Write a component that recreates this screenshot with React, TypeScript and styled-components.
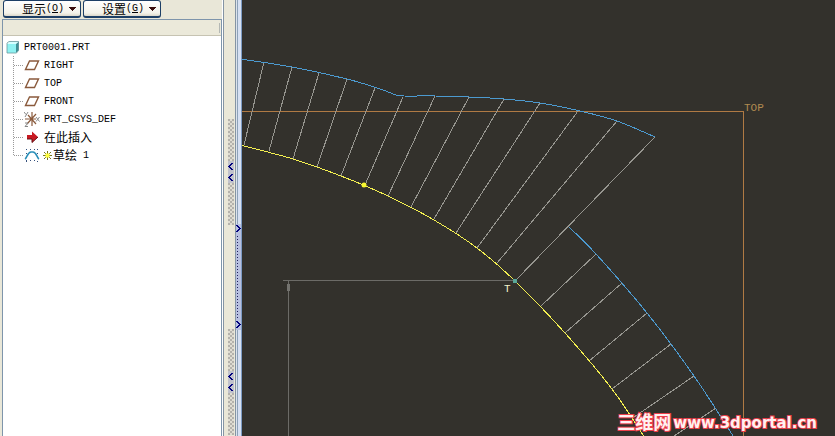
import React from "react";
import styled, { createGlobalStyle } from "styled-components";

const Global = createGlobalStyle`
  * { box-sizing: border-box; }
  body { margin: 0; background: #ece9d8; }
`;

const LATIN = `"Liberation Mono", "Noto Sans CJK SC", monospace`;
const HAN = `"Noto Sans CJK SC", sans-serif`;

const Page = styled.div`
  display: flex;
  height: 100vh;
  overflow: hidden;
  background: #e9e7d8;
  color: #000;
`;

const Sidebar = styled.aside`
  display: flex;
  flex-direction: column;
  flex: 0 0 222px;
  padding-left: 2px;
`;

const Toolbar = styled.div`
  display: flex;
  gap: 2px;
  height: 19px;
  padding-left: 1px;
`;

const MenuButton = styled.button`
  display: flex;
  align-items: center;
  justify-content: center;
  width: 78px;
  height: 18px;
  padding: 1px 0 0 14px;
  border: 1px solid #1d3f66;
  border-bottom-width: 2px;
  border-radius: 3px;
  background: linear-gradient(#fff, #f3f2ea 80%, #dcd8ca);
  font: 12px/18px ${HAN};
  color: #000;
  white-space: nowrap;
`;

const Key = styled.span`
  margin-right: 4px;
  font: 10px/14px ${LATIN};
`;

const TreePanel = styled.section`
  display: flex;
  flex-direction: column;
  flex: 1;
  border: 1px solid #7e95ab;
  border-bottom: 0;
  background: #fff;
`;

const ColumnHeader = styled.div`
  display: flex;
  justify-content: flex-end;
  height: 16px;
  padding: 3px 1px 2px;
  border-bottom: 1px solid #c6c3b2;
  background: #ebe9da;
`;

const HeaderDivider = styled.span`
  width: 1px;
  background: #b4b8b4;
`;

const Tree = styled.ul`
  margin: 0;
  padding: 2px 0 0 3px;
  list-style: none;
`;

const Branch = styled.ul`
  margin: 0;
  padding: 0 0 0 6px;
  list-style: none;
`;

const Row = styled.div`
  display: flex;
  align-items: center;
  height: 18px;
  svg { flex: none; display: block; }
`;

const Label = styled.span<{ $han?: boolean; $inset?: number }>`
  margin-left: ${(p) => p.$inset ?? 4}px;
  padding-top: ${(p) => (p.$han ? 0 : 2)}px;
  font: ${(p) => (p.$han ? 12 : 10)}px/18px ${(p) => (p.$han ? HAN : LATIN)};
  white-space: pre;
`;

const SketchMark = styled.span`
  margin: 0 1px 0 3px;
`;

const Sash = styled.div`
  display: flex;
  flex: 0 0 20px;
  border-left: 1px solid #fff;
`;

const SashTrack = styled.div<{ $blue?: boolean }>`
  display: flex;
  flex-direction: column;
  align-items: flex-end;
  width: ${(p) => (p.$blue ? 7 : 12)}px;
  padding-top: ${(p) => (p.$blue ? 224 : 119)}px;
  gap: 104px;
  border-left: 1px solid #8494a4;
  border-right: ${(p) => (p.$blue ? "1px solid #7d9bc4" : "0")};
  padding-right: ${(p) => (p.$blue ? 0 : 1)}px;
  background: ${(p) =>
    p.$blue
      ? "linear-gradient(90deg, #dce3ec 0 1px, #8ea2b8 1px 2px, #d6e0f2 2px)"
      : "#e9e7d8"};
`;

const Grip = styled.button<{ $blue?: boolean }>`
  flex: none;
  width: ${(p) => (p.$blue ? 5 : 6)}px;
  height: 106px;
  padding: 0;
  border: 0;
  background: ${(p) => (p.$blue ? "#b8c0e0" : "#dedcd2")};
  svg { display: block; }
`;

const Viewport = styled.main`
  position: relative;
  flex: 1;
  min-width: 0;
  background: #33312c;
`;

const Drawing = styled.svg`
  display: block;
  width: 100%;
  height: 100%;
`;

const Watermark = styled.a`
  position: absolute;
  right: 18px;
  bottom: 4px;
  display: flex;
  align-items: flex-start;
  gap: 2px;
  font: bold 15px/18px "DejaVu Sans", sans-serif;
  color: #fff0f0;
  text-decoration: none;
  white-space: nowrap;
  -webkit-text-stroke: 2px #ec3f4a;
  paint-order: stroke fill;
`;

const WatermarkHan = styled.span`
  font: bold 18px/15px ${HAN};
`;

type Pt = [number, number];

function smooth(pts: Pt[]): string {
  let d = `M${pts[0]}`;
  for (let i = 0; i < pts.length - 1; i++) {
    const a = pts[i - 1] ?? pts[i];
    const b = pts[i];
    const c = pts[i + 1];
    const e = pts[i + 2] ?? c;
    d += `C${b[0] + (c[0] - a[0]) / 6},${b[1] + (c[1] - a[1]) / 6} ${c[0] - (e[0] - b[0]) / 6},${c[1] - (e[1] - b[1]) / 6} ${c}`;
  }
  return d;
}

const curve: Pt[] = [
  [240, 145], [293, 159], [341, 176], [388, 196], [434, 220], [477, 248],
  [515, 281], [565, 333], [612, 389], [645, 438],
];
const upper: Pt[] = [
  [240, 59], [292, 67], [347, 79], [380, 89], [396, 95],
  [404, 96], [435, 96], [469, 97], [504, 99], [540, 103], [580, 111],
  [617, 121], [655, 137],
];
const lower: Pt[] = [
  [569, 227], [596, 254], [647, 313], [694, 376], [735, 439],
];
const comb: [number, number, number, number][] = [
  [264, 62, 244, 145], [292, 67, 269, 151], [319, 73, 293, 159], [347, 79, 317, 167],
  [375, 88, 341, 176], [403, 97, 365, 185], [435, 96, 388, 196], [469, 97, 411, 207],
  [504, 99, 434, 219], [540, 103, 456, 233], [578, 111, 477, 248], [617, 121, 497, 263],
  [655, 137, 515, 281], [596, 254, 541, 306], [622, 283, 565, 333], [647, 313, 589, 361],
  [671, 344, 612, 389], [694, 376, 634, 417], [716, 408, 671, 438],
];

const Caret = () => (
  <svg width="8" height="4" viewBox="0 0 8 4" shapeRendering="crispEdges">
    <path d="M0 0H8L4 4Z" fill="#3a0d0d" />
  </svg>
);

const PartIcon = () => (
  <svg width="14" height="14" viewBox="0 0 14 14">
    <path d="M1 4L4 1.5H13L10 4Z" fill="#d6ffff" />
    <path d="M10 4L13 1.5V10L10 13Z" fill="#3f8f95" />
    <path d="M1 4H10V13H1Z" fill="#8ff2f2" />
    <path d="M1 3L3 1.500H12.500V10.500L10.500 13H1Z" fill="none" stroke="#6a9a9e" strokeWidth=".8" />
  </svg>
);

const PlaneIcon = () => (
  <svg width="16" height="16" viewBox="0 0 16 16">
    <path d="M5.5 4H14.5L10.5 12.5H1.5Z" fill="#fff" stroke="#8a5a3c" strokeWidth="1.4" />
  </svg>
);

const CsysIcon = () => (
  <svg width="16" height="16" viewBox="0 0 16 16">
    <path d="M1 8H12M4 4L12 13M8 1V15M12 3L3 13" stroke="#8a5a3c" strokeWidth="1.2" />
    <path d="M0 1L2 3.5M4 1L1 6M12 6L15.5 10.5M15.5 6L12 10.5M1 12H4L1 15.5H4" fill="none" stroke="#888" />
  </svg>
);

const InsertIcon = () => (
  <svg width="16" height="16" viewBox="0 0 16 16">
    <path d="M3 6H8V2.5L14 8L8 13.5V10H3Z" fill="#c81a22" />
    <path d="M3 10H8V13.5L14 8" fill="none" stroke="#651014" />
  </svg>
);

const SketchIcon = () => (
  <svg width="16" height="16" viewBox="0 0 16 16">
    <path d="M2.5 2V15M13.5 2V15M2 2.5H14M2 13.5H14" stroke="#36507c" strokeDasharray="1 3" shapeRendering="crispEdges" />
    <path d="M1 12C3 11 3.500 5 7 5H9C12.500 5 13 11 15 12" fill="none" stroke="#2a8fb8" strokeWidth="1.6" />
  </svg>
);

const SunIcon = () => (
  <svg width="9" height="9" viewBox="0 0 9 9">
    <path d="M4.500 0V9M0 4.500H9M1 1L8 8M8 1L1 8" stroke="#77771c" strokeWidth="1" />
    <rect x="2.500" y="2.500" width="4" height="4" fill="#ffff38" />
  </svg>
);

const Connector = ({ last }: { last?: boolean }) => (
  <svg width="12" height="18" viewBox="0 0 12 18" shapeRendering="crispEdges">
    <path d={`M1.500 0V${last ? 10 : 18}M2 9.500H12`} stroke="#999" strokeDasharray="1 1" />
  </svg>
);

const SideGrip = () => (
  <Grip aria-label="Collapse panel">
    <svg width="6" height="106" viewBox="0 0 6 106" shapeRendering="crispEdges">
      <defs>
        <pattern id="hatch" width="4" height="4" patternUnits="userSpaceOnUse">
          <path d="M0 0H2V2H0ZM2 2H4V4H2Z" fill="#b4b2ac" />
        </pattern>
      </defs>
      <rect width="6" height="106" fill="url(#hatch)" />
      <path d="M0 42H6V64H0Z" fill="#c0c2cc" />
      <path d="M4.500 44L1.500 47.500L4.500 51M4.500 55L1.500 58.500L4.500 62" fill="none" stroke="#00007c" strokeWidth="1.500" />
    </svg>
  </Grip>
);

const CenterGrip = () => (
  <Grip $blue aria-label="Expand panel">
    <svg width="5" height="106" viewBox="0 0 5 106" shapeRendering="crispEdges">
      <path d="M1 1L4 4.500L1 8M1 97L4 100.500L1 104" fill="none" stroke="#00007c" strokeWidth="1.500" />
      <path d="M1.500 12V94" stroke="#20205c" strokeDasharray="1 2" />
    </svg>
  </Grip>
);

const planes = ["RIGHT", "TOP", "FRONT"];

export default function App() {
  return (
    <Page>
      <Global />
      <Sidebar>
        <Toolbar>
          <MenuButton>显示<Key>(<u>O</u>)</Key><Caret /></MenuButton>
          <MenuButton>设置<Key>(<u>G</u>)</Key><Caret /></MenuButton>
        </Toolbar>
        <TreePanel>
          <ColumnHeader><HeaderDivider /></ColumnHeader>
          <Tree>
            <li>
              <Row><PartIcon /><Label>PRT0001.PRT</Label></Row>
              <Branch>
                {planes.map((name) => (
                  <li key={name}><Row><Connector /><PlaneIcon /><Label>{name}</Label></Row></li>
                ))}
                <li><Row><Connector /><CsysIcon /><Label>PRT_CSYS_DEF</Label></Row></li>
                <li><Row><Connector /><InsertIcon /><Label $han>在此插入</Label></Row></li>
                <li>
                  <Row>
                    <Connector last /><SketchIcon />
                    <SketchMark><SunIcon /></SketchMark>
                    <Label $han $inset={0}>草绘</Label>
                    <Label $inset={6}>1</Label>
                  </Row>
                </li>
              </Branch>
            </li>
          </Tree>
        </TreePanel>
      </Sidebar>
      <Sash>
        <SashTrack><SideGrip /><SideGrip /></SashTrack>
        <SashTrack $blue><CenterGrip /></SashTrack>
      </Sash>
      <Viewport>
        <Drawing viewBox="242 0 593 436" preserveAspectRatio="xMinYMin slice">
          <g fill="none" shapeRendering="crispEdges">
            <path d="M242 111.500H743.500V436" stroke="#b07a44" />
            <path d="M283 280.500H515M288.500 280V436" stroke="#6c6b67" />
            <path d="M287 284H290V291H287Z" fill="#74736f" />
            <path d={comb.map(([a, b, c, d]) => `M${a} ${b}L${c} ${d}`).join("")} stroke="#979690" />
            <path d={smooth(upper)} stroke="#4c9ad0" />
            <path d={smooth(lower)} stroke="#4c9ad0" />
            <path d={smooth(curve)} stroke="#f4f050" />
          </g>
          <circle cx="364" cy="185" r="2.500" fill="#f8f830" />
          <rect x="513" y="279" width="4" height="4" fill="#5aa898" />
          <text x="744" y="111" fill="#b08a50" fontFamily="Liberation Mono, monospace" fontSize="11">TOP</text>
          <text x="504" y="292" fill="#f4f2c8" fontFamily="Liberation Mono, monospace" fontSize="11">T</text>
        </Drawing>
        <Watermark href="#"><WatermarkHan>三维网</WatermarkHan>www.3dportal.cn</Watermark>
      </Viewport>
    </Page>
  );
}
